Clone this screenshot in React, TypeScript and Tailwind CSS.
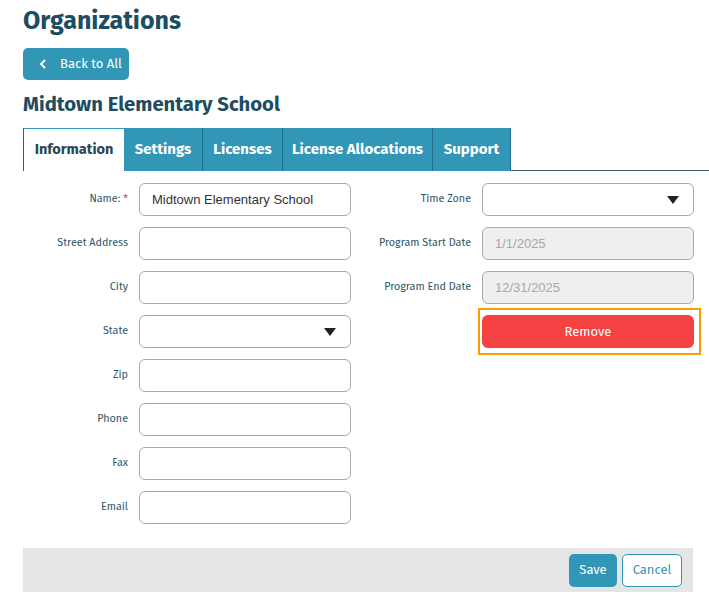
import { useState } from 'react';

const LEFT_FIELDS = ['Street Address', 'City', 'State', 'Zip', 'Phone', 'Fax', 'Email'];
const TABS = [
  { name: 'Settings', w: 'w-[79px]' },
  { name: 'Licenses', w: 'w-[80px]' },
  { name: 'License Allocations', w: 'w-[150px]' },
  { name: 'Support', w: 'w-[78px]' },
];

const font = { fontFamily: '"Fira Sans", Lato, "Noto Sans", sans-serif' };

const Caret = () => (
  <svg width="12" height="10" viewBox="0 0 12 10" className="absolute right-[14px] top-1/2 -translate-y-1/2">
    <path d="M0 1h12L6 9z" fill="#222" />
  </svg>
);

function Label({ children, required }: { children: string; required?: boolean }) {
  return (
    <span className="text-[10.75px] text-[#2e5668] text-right leading-none" style={font}>
      {children}
      {required && <span className="text-[#e03a3a] ml-[3px]">*</span>}
    </span>
  );
}

function Field({ value = '', select, disabled }: { value?: string; select?: boolean; disabled?: boolean }) {
  return (
    <div
      className={`relative h-[33px] w-[212px] rounded-[6px] border border-[#a9a9a9] flex items-center px-[12px] text-[13px] ${
        disabled ? 'bg-[#efefef] text-[#a8a8a8]' : 'bg-white text-[#333]'
      }`}
      style={{ fontFamily: '"Liberation Sans", Arial, sans-serif' }}
    >
      {value}
      {select && <Caret />}
    </div>
  );
}

export default function App() {
  const [tab] = useState('Information');

  return (
    <div className="min-h-screen bg-white pl-[23px] pt-[6px]" style={font}>
      <h1 className="text-[25px] font-bold text-[#1d4d62] leading-[30px]" style={font}>Organizations</h1>

      <button
        type="button"
        className="mt-[12px] h-[32px] w-[106px] rounded-[5px] bg-[#3296b7] text-white text-[13px] flex items-center pl-[16px] gap-[13px]"
      >
        <svg width="8" height="10" viewBox="0 0 8 10" fill="none" stroke="white" strokeWidth="2" strokeLinecap="round" strokeLinejoin="round">
          <path d="M5.5 1.5L2 5l3.5 3.5" />
        </svg>
        Back to All
      </button>

      <h2 className="mt-[12px] text-[20.25px] font-bold text-[#1d4d62] leading-[24px]">Midtown Elementary School</h2>

      <div className="mt-[12px] flex items-stretch h-[43px] border-b border-[#3f5c6c]">
        <div className="relative -mb-px w-[101px] bg-white border-l border-t border-[#3f5c6c] border-t-[#3296b7] flex items-center justify-center text-[14.5px] font-bold text-[#2b4653]">
          {tab}
        </div>
        {TABS.map((t) => (
          <div
            key={t.name}
            className={`-mb-px ${t.w} bg-[#3296b7] border-r border-[#1f6f8a] flex items-center justify-center text-[15px] font-bold text-white`}
          >
            {t.name}
          </div>
        ))}
      </div>

      <div className="flex pt-[12px]">
        <div className="grid grid-cols-[105px_212px] gap-x-[11px] gap-y-[11px] items-center">
          <Label required>Name:</Label>
          <Field value="Midtown Elementary School" />
          {LEFT_FIELDS.map((f) => (
            <div key={f} className="contents">
              <Label>{f}</Label>
              <Field select={f === 'State'} />
            </div>
          ))}
        </div>

        <div className="grid grid-cols-[120px_212px] gap-x-[11px] gap-y-[11px] items-center content-start">
          <Label>Time Zone</Label>
          <Field select />
          <Label>Program Start Date</Label>
          <Field value="1/1/2025" disabled />
          <Label>Program End Date</Label>
          <Field value="12/31/2025" disabled />
          <span />
          <div className="relative">
            <span className="absolute -left-[4px] -right-[7px] -top-[7px] -bottom-[7px] border-[2.5px] border-[#ff9c00]" />
            <button type="button" className="relative h-[33px] w-[212px] rounded-[6px] bg-[#f44242] text-white text-[13px]">
              Remove
            </button>
          </div>
        </div>
      </div>

      <div className="mt-[24px] mr-[16px] h-[44px] bg-[#e5e5e5] flex items-center justify-end gap-[5px] pr-[11px]">
        <button type="button" className="h-[33px] w-[48px] rounded-[5px] bg-[#3296b7] text-white text-[13px]">
          Save
        </button>
        <button type="button" className="h-[33px] w-[60px] rounded-[5px] bg-white border border-[#3296b7] text-[#3296b7] text-[13px]">
          Cancel
        </button>
      </div>
    </div>
  );
}
